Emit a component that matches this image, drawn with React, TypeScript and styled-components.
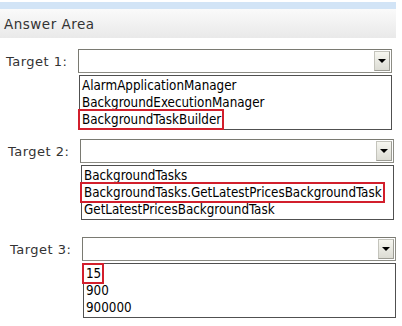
import React from "react";
import styled, { createGlobalStyle } from "styled-components";

const Global = createGlobalStyle`
  html, body { margin: 0; padding: 0; background: #ffffff; }
  body { width: 402px; height: 326px; overflow: hidden; font-family: "DejaVu Sans", Verdana, sans-serif; }
`;

const Page = styled.div`
  width: 402px;
  padding-top: 2px;
`;

const TopBar = styled.div`
  width: 396px;
  height: 7px;
  background: #d2e4f6;
`;

const Header = styled.div`
  width: 392px;
  height: 29px;
  padding-left: 4px;
  display: flex;
  align-items: center;
  background: linear-gradient(#fafafa, #e9e9e9);
  color: #333333;
  font-size: 13.5px;
  letter-spacing: 0.5px;
`;

const Section = styled.div<{ $top: number; $shift: number }>`
  display: grid;
  grid-template-columns: 72px 314px;
  align-items: center;
  padding-top: ${(p) => p.$top}px;
  padding-left: ${(p) => 6 + p.$shift}px;
`;

const Label = styled.div`
  font-size: 13px;
  letter-spacing: 0.5px;
  color: #333333;
`;

const Select = styled.div`
  height: 24px;
  box-sizing: border-box;
  border: 1px solid #8c8c84;
  border-top-color: #7a7a72;
  border-left-color: #7a7a72;
  background: #ffffff;
  display: flex;
  justify-content: flex-end;
  align-items: center;
  padding-right: 1px;
`;

const DropButton = styled.div`
  width: 16px;
  height: 20px;
  box-sizing: border-box;
  background: linear-gradient(#f6f6f0, #dcdcd4);
  border: 1px solid #c4c4bc;
  border-right-color: #9c9c94;
  border-bottom-color: #9c9c94;
  display: flex;
  align-items: center;
  justify-content: center;
`;

const Arrow = styled.div`
  width: 0;
  height: 0;
  border-left: 4px solid transparent;
  border-right: 4px solid transparent;
  border-top: 4px solid #000000;
`;

const List = styled.div`
  grid-column: 2;
  margin-top: 2px;
  margin-left: 1px;
  box-sizing: border-box;
  border: 1px solid #505050;
  padding: 1px 0;
  font-family: "DejaVu Sans Condensed", "DejaVu Sans", sans-serif;
  font-size: 13.3px;
  color: #000000;
`;

const Item = styled.div`
  height: 17px;
  line-height: 17px;
  padding-left: 2px;
  white-space: nowrap;
`;

const Mark = styled.span`
  display: inline-block;
  line-height: 15px;
  outline: 2px solid #d21f2c;
  outline-offset: 1px;
  padding-left: 1px;
  margin-left: -1px;
`;

type Target = { label: string; items: string[]; pick: number; top: number; shift: number };

const targets: Target[] = [
  {
    label: "Target 1:",
    items: ["AlarmApplicationManager", "BackgroundExecutionManager", "BackgroundTaskBuilder"],
    pick: 2,
    top: 11,
    shift: 0,
  },
  {
    label: "Target 2:",
    items: ["BackgroundTasks", "BackgroundTasks.GetLatestPricesBackgroundTask", "GetLatestPricesBackgroundTask"],
    pick: 1,
    top: 9,
    shift: 2,
  },
  {
    label: "Target 3:",
    items: ["15", "900", "900000"],
    pick: 0,
    top: 17,
    shift: 4,
  },
];

export default function App() {
  return (
    <Page>
      <Global />
      <TopBar />
      <Header>Answer Area</Header>
      {targets.map((t) => (
        <Section key={t.label} $top={t.top} $shift={t.shift}>
          <Label>{t.label}</Label>
          <Select>
            <DropButton>
              <Arrow />
            </DropButton>
          </Select>
          <List>
            {t.items.map((it, i) => (
              <Item key={it}>{i === t.pick ? <Mark>{it}</Mark> : it}</Item>
            ))}
          </List>
        </Section>
      ))}
    </Page>
  );
}
